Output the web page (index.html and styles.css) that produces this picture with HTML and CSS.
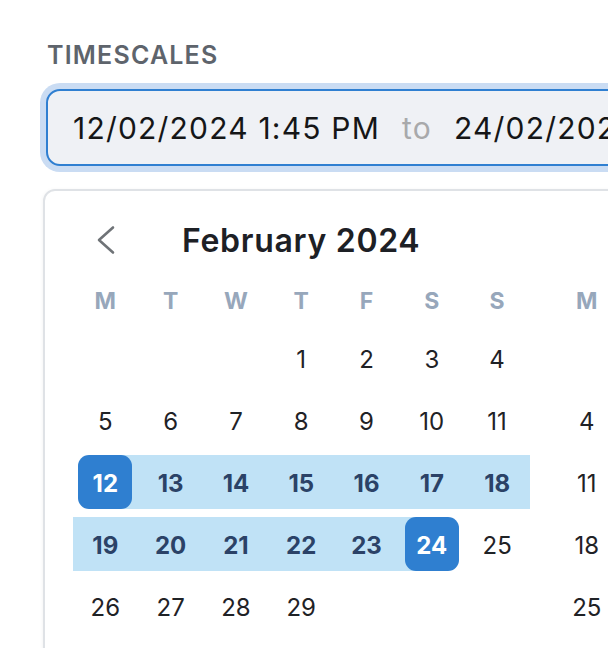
FILE: index.html
```html
<!DOCTYPE html>
<html>
<head>
<meta charset="utf-8">
<link rel="stylesheet" href="styles.css">
</head>
<body>
<div class="page">
  <div class="label">TIMESCALES</div>
  <div class="input">
    <span class="val">12/02/2024 1:45 PM</span>
    <span class="to">to</span>
    <span class="val">24/02/2024 1:45 PM</span>
  </div>
  <div class="card">
    <div class="months">
      <div class="month">
        <div class="head">
          <svg class="chev" width="20" height="30" viewBox="0 0 20 30"><polyline points="16,2.5 2,15 16,27.5" fill="none" stroke="#6f7377" stroke-width="2.6" stroke-linecap="round" stroke-linejoin="round"/></svg>
          <div class="title">February 2024</div>
          <div></div>
        </div>
        <div class="grid wd">
          <div>M</div><div>T</div><div>W</div><div>T</div><div>F</div><div>S</div><div>S</div>
        </div>
        <div class="grid days">
          <div></div><div></div><div></div><div class="d">1</div><div class="d">2</div><div class="d">3</div><div class="d">4</div>
          <div class="d">5</div><div class="d">6</div><div class="d">7</div><div class="d">8</div><div class="d">9</div><div class="d">10</div><div class="d">11</div>
          <div class="d start"><span class="pill">12</span></div><div class="d in">13</div><div class="d in">14</div><div class="d in">15</div><div class="d in">16</div><div class="d in">17</div><div class="d in">18</div>
          <div class="d in">19</div><div class="d in">20</div><div class="d in">21</div><div class="d in">22</div><div class="d in">23</div><div class="d end"><span class="pill">24</span></div><div class="d">25</div>
          <div class="d">26</div><div class="d">27</div><div class="d">28</div><div class="d">29</div><div></div><div></div><div></div>
        </div>
      </div>
      <div class="month">
        <div class="head">
          <div></div>
          <div class="title">March 2024</div>
          <div></div>
        </div>
        <div class="grid wd">
          <div>M</div><div>T</div><div>W</div><div>T</div><div>F</div><div>S</div><div>S</div>
        </div>
        <div class="grid days">
          <div></div><div></div><div></div><div></div><div class="d">1</div><div class="d">2</div><div class="d">3</div>
          <div class="d">4</div><div class="d">5</div><div class="d">6</div><div class="d">7</div><div class="d">8</div><div class="d">9</div><div class="d">10</div>
          <div class="d">11</div><div class="d">12</div><div class="d">13</div><div class="d">14</div><div class="d">15</div><div class="d">16</div><div class="d">17</div>
          <div class="d">18</div><div class="d">19</div><div class="d">20</div><div class="d">21</div><div class="d">22</div><div class="d">23</div><div class="d">24</div>
          <div class="d">25</div><div class="d">26</div><div class="d">27</div><div class="d">28</div><div class="d">29</div><div class="d">30</div><div class="d">31</div>
        </div>
      </div>
    </div>
  </div>
</div>
</body>
</html>
```
FILE: styles.css
```css
html, body {
  margin: 0;
  padding: 0;
  background: #ffffff;
  overflow: hidden;
  width: 608px;
  height: 648px;
}
.page {
  font-family: Inter, "Noto Sans", sans-serif;
  padding: 40px 0 0 46px;
  width: 1200px;
}
.label {
  font-size: 25px;
  font-weight: 600;
  color: #5e646c;
  letter-spacing: 1.2px;
  line-height: 30px;
  margin-left: 1px;
}
.input {
  margin-top: 19px;
  width: 900px;
  height: 77px;
  box-sizing: border-box;
  border: 2px solid #2f7fd1;
  border-radius: 14px;
  background: #eff1f5;
  box-shadow: 0 0 0 6px #cadcf3;
  display: flex;
  align-items: center;
  padding-left: 25px;
  font-size: 30px;
  letter-spacing: 1.2px;
  color: #151617;
}
.to {
  color: #a8a9ab;
  margin: 0 22px;
}
.card {
  margin: 23px 0 0 -3px;
  width: 1100px;
  height: 600px;
  box-sizing: border-box;
  border: 2px solid #dfe2e6;
  border-radius: 12px;
  box-shadow: 0 1px 4px rgba(0,0,0,0.06);
  padding: 29px 0 0 27.7px;
}
.months {
  display: flex;
  gap: 24.5px;
}
.month {
  width: 457px;
}
.head {
  display: grid;
  grid-template-columns: 1fr auto 1fr;
  align-items: center;
  height: 40px;
}
.chev {
  margin-left: 24px;
}
.title {
  font-size: 32px;
  font-weight: 600;
  letter-spacing: 0.7px;
  color: #1d2025;
}
.grid {
  display: grid;
  grid-template-columns: repeat(7, 65.3px);
}
.wd {
  margin-top: 26px;
  line-height: 30px;
  font-size: 23px;
  font-weight: 700;
  color: #97a7bb;
  text-align: center;
}
.days {
  margin-top: 15px;
  grid-auto-rows: 54px;
  row-gap: 8px;
  font-size: 24px;
  color: #1f2226;
}
.d {
  display: flex;
  align-items: center;
  justify-content: center;
  padding-top: 3px;
  box-sizing: border-box;
}
.in {
  background: #c0e2f6;
  font-weight: 700;
  color: #2b4267;
}
.start {
  background: linear-gradient(to right, transparent 50%, #c0e2f6 50%);
  padding-top: 0;
}
.end {
  background: linear-gradient(to right, #c0e2f6 50%, transparent 50%);
  padding-top: 0;
}
.pill {
  width: 54px;
  height: 54px;
  border-radius: 11px;
  background: #2f7fd0;
  color: #ffffff;
  font-weight: 700;
  display: flex;
  align-items: center;
  justify-content: center;
  padding-top: 3px;
  box-sizing: border-box;
}
```
